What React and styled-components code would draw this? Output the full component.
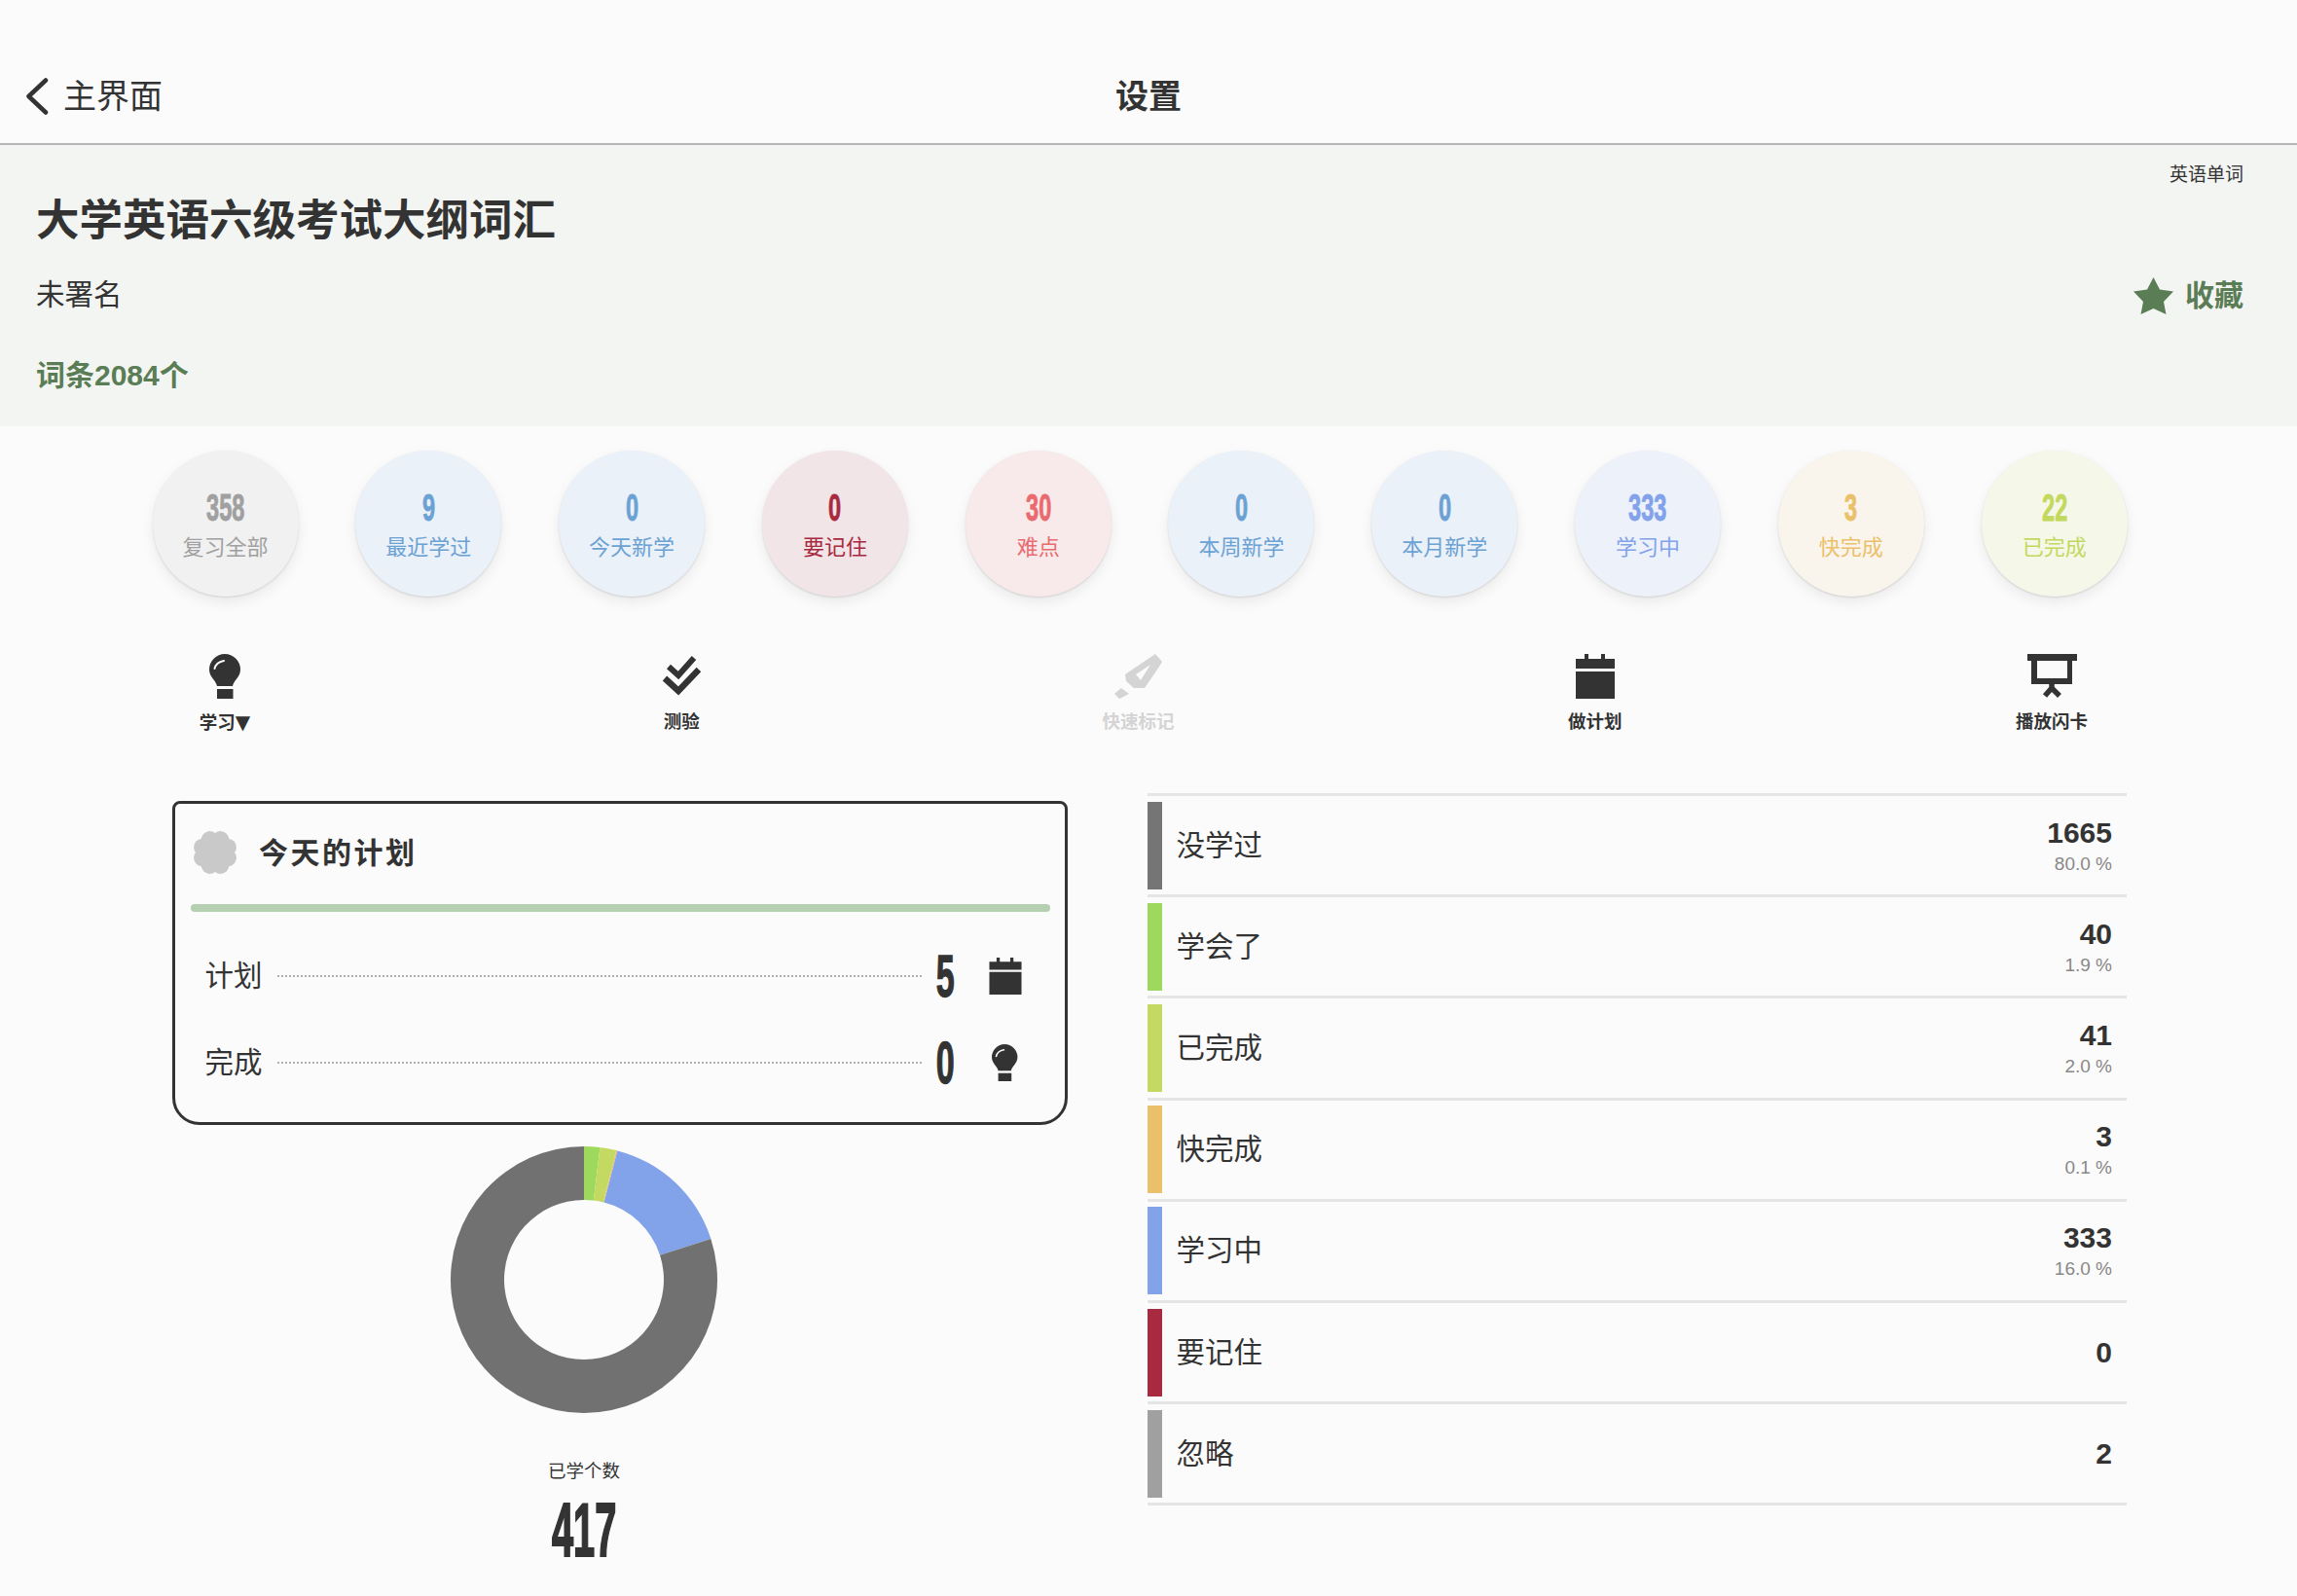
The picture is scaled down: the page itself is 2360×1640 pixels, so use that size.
import React from "react";
import styled, { createGlobalStyle } from "styled-components";

const GlobalStyle = createGlobalStyle`
  html, body {
    margin: 0;
    padding: 0;
    background-color: #fbfbfb;
  }
  body {
    font-family: "Liberation Sans", "Noto Sans CJK SC", sans-serif;
    color: #333;
  }
`;

const Page = styled.div`
  width: 2360px;
  height: 1640px;
  overflow: hidden;
  background-color: #fbfbfb;
`;

const Header = styled.div`
  display: grid;
  grid-template-columns: 1fr auto 1fr;
  align-items: center;
  height: 147px;
  border-bottom: 2px solid #b6b6b6;
`;
const Back = styled.div`
  display: flex;
  align-items: center;
  gap: 15px;
  padding: 50px 0 0 26px;
  font-size: 34px;
  line-height: 44px;
`;
const PageTitle = styled.div`
  padding-top: 50px;
  font-size: 34px;
  line-height: 44px;
  font-weight: 700;
`;

const Hero = styled.div`
  display: flex;
  justify-content: space-between;
  height: 289px;
  padding: 0 55px 0 37px;
  background-color: #f3f5f2;
`;
const HeroLeft = styled.div`
  padding-top: 51px;
`;
const BookTitle = styled.div`
  font-size: 44.5px;
  line-height: 54px;
  font-weight: 700;
`;
const Author = styled.div`
  margin-top: 31px;
  font-size: 29.5px;
  line-height: 36px;
`;
const Count = styled.div`
  margin-top: 47px;
  font-size: 30px;
  line-height: 36px;
  font-weight: 700;
  color: #5a7d55;
`;
const HeroRight = styled.div`
  display: flex;
  flex-direction: column;
  align-items: flex-end;
  padding-top: 19px;
`;
const Tag = styled.div`
  font-size: 19px;
  line-height: 24px;
`;
const Favorite = styled.div`
  display: flex;
  align-items: center;
  gap: 12px;
  margin-top: 90px;
  font-size: 30px;
  line-height: 44px;
  font-weight: 700;
  color: #5a7d55;
`;

const Stats = styled.div`
  display: flex;
  gap: 58.8px;
  padding: 25px 0 0 156.5px;
`;
const Circle = styled.div`
  display: flex;
  flex-direction: column;
  align-items: center;
  flex: none;
  width: 150px;
  height: 150px;
  border-radius: 50%;
  background-color: ${(p) => p.$bg};
  color: ${(p) => p.$color};
  box-shadow: 0 1px 2px rgba(0, 0, 0, 0.12), 0 6px 14px rgba(0, 0, 0, 0.07);
`;
const StatNumber = styled.div`
  display: flex;
  justify-content: center;
  margin-top: 37px;
  height: 44px;
  line-height: 44px;
`;
const Condensed = styled.span`
  display: inline-block;
  white-space: nowrap;
  font-weight: 700;
  font-size: ${(p) => p.$size}px;
  transform: scaleX(${(p) => p.$scale});
  -webkit-text-stroke: ${(p) => p.$stroke || 0.8}px currentColor;
`;
const StatLabel = styled.div`
  margin-top: 5px;
  font-size: 22px;
  line-height: 28px;
`;

const Toolbar = styled.div`
  display: flex;
  justify-content: space-between;
  padding: 59px 202px 0 181px;
`;
const Tool = styled.div`
  display: flex;
  flex-direction: column;
  align-items: center;
  width: 100px;
  color: ${(p) => (p.$disabled ? "#d4d4d4" : "#333")};
`;
const ToolIcon = styled.div`
  display: flex;
  align-items: center;
  justify-content: center;
  height: 46px;
`;
const ToolLabel = styled.div`
  margin-top: 12px;
  font-size: 18.5px;
  line-height: 24px;
  font-weight: 700;
  white-space: nowrap;
`;
const Arrow = styled.span`
  font-family: "DejaVu Sans", sans-serif;
  font-size: 20px;
  font-weight: 400;
`;

const Content = styled.div`
  display: flex;
  align-items: flex-start;
  gap: 81.5px;
  padding: 60px 0 0 177px;
`;
const LeftCol = styled.div`
  display: flex;
  flex-direction: column;
  flex: none;
  width: 920px;
  padding-top: 8px;
`;
const PlanCard = styled.div`
  box-sizing: border-box;
  height: 333px;
  padding: 0 15.5px;
  border: 3.5px solid #333;
  border-radius: 8px 8px 28px 28px;
`;
const PlanHead = styled.div`
  display: flex;
  align-items: center;
  gap: 22px;
  height: 100px;
  padding-left: 2.5px;
`;
const PlanTitle = styled.div`
  margin-top: 1px;
  font-size: 30px;
  line-height: 40px;
  font-weight: 700;
  letter-spacing: 2.5px;
`;
const PlanBar = styled.div`
  height: 8px;
  margin: 3px 0 21px;
  border-radius: 4px;
  background-color: #b5d0b0;
`;
const PlanRow = styled.div`
  display: flex;
  align-items: center;
  height: 89px;
  padding-left: 15px;
`;
const PlanLabel = styled.div`
  font-size: 29.5px;
  line-height: 40px;
`;
const Dots = styled.div`
  flex: 1;
  margin: 0 15px;
  border-top: 2px dotted #b0b0b0;
`;
const PlanNumber = styled.div`
  display: flex;
  justify-content: center;
  width: 20px;
`;
const PlanIcon = styled.div`
  display: flex;
  justify-content: center;
  width: 46px;
  margin: 0 23px 0 28px;
`;

const Chart = styled.div`
  display: flex;
  flex-direction: column;
  align-items: center;
  padding: 22px 74px 0 0;
`;
const ChartLabel = styled.div`
  margin-top: 48px;
  font-size: 18.5px;
  line-height: 24px;
`;
const ChartNumber = styled.div`
  display: flex;
  justify-content: center;
  margin-top: 9px;
  line-height: 78px;
`;

const RightCol = styled.div`
  flex: none;
  width: 1006px;
  border-bottom: 3px solid #e5e5e5;
`;
const Row = styled.div`
  display: flex;
  align-items: center;
  height: 90px;
  padding: 5.6px 14.5px 5.6px 0;
  border-top: 3px solid #e5e5e5;
`;
const Swatch = styled.div`
  flex: none;
  width: 15px;
  height: 90px;
  background-color: ${(p) => p.$color};
`;
const RowLabel = styled.div`
  flex: 1;
  margin-left: 15px;
  font-size: 29.5px;
  line-height: 40px;
`;
const RowValues = styled.div`
  text-align: right;
`;
const RowValue = styled.div`
  font-size: 30px;
  line-height: 36px;
  font-weight: 700;
`;
const RowPercent = styled.div`
  margin-top: 2px;
  font-size: 19px;
  line-height: 24px;
  color: #888;
`;

const stats = [
  { num: "358", label: "复习全部", bg: "#f1f1f1", color: "#a0a0a0" },
  { num: "9", label: "最近学过", bg: "#ebf1f8", color: "#6ba2d4" },
  { num: "0", label: "今天新学", bg: "#ebf1f8", color: "#6ba2d4" },
  { num: "0", label: "要记住", bg: "#f2e5e8", color: "#a82a40" },
  { num: "30", label: "难点", bg: "#f8e9ea", color: "#e96b70" },
  { num: "0", label: "本周新学", bg: "#ebf1f8", color: "#6ba2d4" },
  { num: "0", label: "本月新学", bg: "#ebf1f8", color: "#6ba2d4" },
  { num: "333", label: "学习中", bg: "#edf1fa", color: "#82a2ea" },
  { num: "3", label: "快完成", bg: "#faf5ec", color: "#ebc06a" },
  { num: "22", label: "已完成", bg: "#f5f7e8", color: "#c3d95e" },
];

const rows = [
  { label: "没学过", value: "1665", pct: "80.0 %", color: "#757575" },
  { label: "学会了", value: "40", pct: "1.9 %", color: "#9cd95c" },
  { label: "已完成", value: "41", pct: "2.0 %", color: "#c4d961" },
  { label: "快完成", value: "3", pct: "0.1 %", color: "#ebc06a" },
  { label: "学习中", value: "333", pct: "16.0 %", color: "#82a2ea" },
  { label: "要记住", value: "0", color: "#a82a40" },
  { label: "忽略", value: "2", color: "#a0a0a0" },
];

const BulbIcon = ({ height = 46 }) => (
  <svg width={(height * 32) / 46} height={height} viewBox="0 0 32 46">
    <path fill="currentColor" d="M8 33C7 27 0 24 0 16A16 16 0 0 1 32 16C32 24 25 27 24 33Z" />
    <rect fill="currentColor" x="8" y="36" width="16.5" height="10" />
    <path fill="none" stroke="#fbfbfb" strokeWidth="2" strokeLinecap="round" d="M5.5 15C6.5 10.5 10 8 15 7" />
  </svg>
);

const CheckIcon = () => (
  <svg width="40" height="42" viewBox="0 0 40 42">
    <path fill="none" stroke="currentColor" strokeWidth="6" d="M7 11L17 20L33 2" />
    <path fill="none" stroke="currentColor" strokeWidth="6.5" d="M3 23L17 36L38 14" />
  </svg>
);

const PenIcon = () => (
  <svg width="50" height="46" viewBox="8 7 50 46">
    <path
      fill="currentColor"
      fillRule="evenodd"
      d="M50 7L57 15L54 20L39 42H28L20 35L19 28ZM45 18L30 28L35 34Z"
    />
    <path fill="currentColor" d="M8 48L15 42L23 48L13 53Z" />
  </svg>
);

const CalendarIcon = ({ width = 40, height = 46 }) => (
  <svg width={width} height={height} viewBox="0 0 40 46">
    <path fill="currentColor" d="M0 5H9V0H13V5H26V0H30V5H40V15H0ZM0 18H40V46H0Z" />
  </svg>
);

const ScreenIcon = () => (
  <svg width="51" height="46" viewBox="7 7 51 46">
    <path fill="currentColor" d="M7 7H58V14H53V38H11V14H7ZM17 14V32H48V14Z" fillRule="evenodd" />
    <path fill="none" stroke="currentColor" strokeWidth="5.5" d="M25 50L32 42L40 50M32 38V42" />
  </svg>
);

const StarIcon = () => (
  <svg width="41" height="38" viewBox="0 0 41 38">
    <path fill="#5a7d55" d="M20.5 0L27 12.5L41 14.5L31 25L33.5 38L20.5 32L7.5 38L10 25L0 14.5L14 12.5Z" />
  </svg>
);

const BackIcon = () => (
  <svg width="24" height="38" viewBox="0 0 24 38">
    <path fill="none" stroke="#333" strokeWidth="4.5" strokeLinecap="round" strokeLinejoin="round" d="M21 2.5L3.5 19L21 35.5" />
  </svg>
);

const FlowerIcon = () => (
  <svg width="46" height="46" viewBox="0 0 46 46">
    <g fill="#c9c9c9">
      <circle cx="23" cy="23" r="17" />
      {[0, 45, 90, 135, 180, 225, 270, 315].map((a) => (
        <circle
          key={a}
          cx={23 + 14 * Math.cos(((a + 22.5) * Math.PI) / 180)}
          cy={23 + 14 * Math.sin(((a + 22.5) * Math.PI) / 180)}
          r="9"
        />
      ))}
    </g>
  </svg>
);

const segments = [
  { value: 40, color: "#9cd95c" },
  { value: 41, color: "#c4d961" },
  { value: 3, color: "#ebc06a" },
  { value: 333, color: "#82a2ea" },
  { value: 1665, color: "#717171" },
];

function arc(start, end) {
  const R = 137;
  const r = 82;
  const pt = (rad, a) => [137 + rad * Math.sin(a), 137 - rad * Math.cos(a)].map((n) => n.toFixed(2)).join(" ");
  const large = end - start > Math.PI ? 1 : 0;
  return `M${pt(R, start)}A${R} ${R} 0 ${large} 1 ${pt(R, end)}L${pt(r, end)}A${r} ${r} 0 ${large} 0 ${pt(r, start)}Z`;
}

const Donut = () => {
  const total = segments.reduce((s, x) => s + x.value, 0);
  let angle = 0;
  return (
    <svg width="274" height="274" viewBox="0 0 274 274">
      {segments.map((s) => {
        const start = angle;
        angle += (s.value / total) * Math.PI * 2;
        return <path key={s.color} fill={s.color} d={arc(start, angle)} />;
      })}
    </svg>
  );
};

export default function App() {
  return (
    <Page>
      <GlobalStyle />
      <Header>
        <Back>
          <BackIcon />
          主界面
        </Back>
        <PageTitle>设置</PageTitle>
        <div />
      </Header>
      <Hero>
        <HeroLeft>
          <BookTitle>大学英语六级考试大纲词汇</BookTitle>
          <Author>未署名</Author>
          <Count>词条2084个</Count>
        </HeroLeft>
        <HeroRight>
          <Tag>英语单词</Tag>
          <Favorite>
            <StarIcon />
            收藏
          </Favorite>
        </HeroRight>
      </Hero>
      <Stats>
        {stats.map((s) => (
          <Circle key={s.label} $bg={s.bg} $color={s.color}>
            <StatNumber>
              <Condensed $size={38} $scale={0.62}>{s.num}</Condensed>
            </StatNumber>
            <StatLabel>{s.label}</StatLabel>
          </Circle>
        ))}
      </Stats>
      <Toolbar>
        <Tool>
          <ToolIcon><BulbIcon /></ToolIcon>
          <ToolLabel>学习<Arrow>▼</Arrow></ToolLabel>
        </Tool>
        <Tool>
          <ToolIcon><CheckIcon /></ToolIcon>
          <ToolLabel>测验</ToolLabel>
        </Tool>
        <Tool $disabled>
          <ToolIcon><PenIcon /></ToolIcon>
          <ToolLabel>快速标记</ToolLabel>
        </Tool>
        <Tool>
          <ToolIcon><CalendarIcon /></ToolIcon>
          <ToolLabel>做计划</ToolLabel>
        </Tool>
        <Tool>
          <ToolIcon><ScreenIcon /></ToolIcon>
          <ToolLabel>播放闪卡</ToolLabel>
        </Tool>
      </Toolbar>
      <Content>
        <LeftCol>
          <PlanCard>
            <PlanHead>
              <FlowerIcon />
              <PlanTitle>今天的计划</PlanTitle>
            </PlanHead>
            <PlanBar />
            <PlanRow>
              <PlanLabel>计划</PlanLabel>
              <Dots />
              <PlanNumber>
                <Condensed $size={62} $scale={0.55} $stroke={1.3}>5</Condensed>
              </PlanNumber>
              <PlanIcon><CalendarIcon width={34} height={38} /></PlanIcon>
            </PlanRow>
            <PlanRow>
              <PlanLabel>完成</PlanLabel>
              <Dots />
              <PlanNumber>
                <Condensed $size={62} $scale={0.55} $stroke={1.3}>0</Condensed>
              </PlanNumber>
              <PlanIcon><BulbIcon height={38} /></PlanIcon>
            </PlanRow>
          </PlanCard>
          <Chart>
            <Donut />
            <ChartLabel>已学个数</ChartLabel>
            <ChartNumber>
              <Condensed $size={78} $scale={0.51} $stroke={2.2}>417</Condensed>
            </ChartNumber>
          </Chart>
        </LeftCol>
        <RightCol>
          {rows.map((r) => (
            <Row key={r.label}>
              <Swatch $color={r.color} />
              <RowLabel>{r.label}</RowLabel>
              <RowValues>
                <RowValue>{r.value}</RowValue>
                {r.pct && <RowPercent>{r.pct}</RowPercent>}
              </RowValues>
            </Row>
          ))}
        </RightCol>
      </Content>
    </Page>
  );
}
